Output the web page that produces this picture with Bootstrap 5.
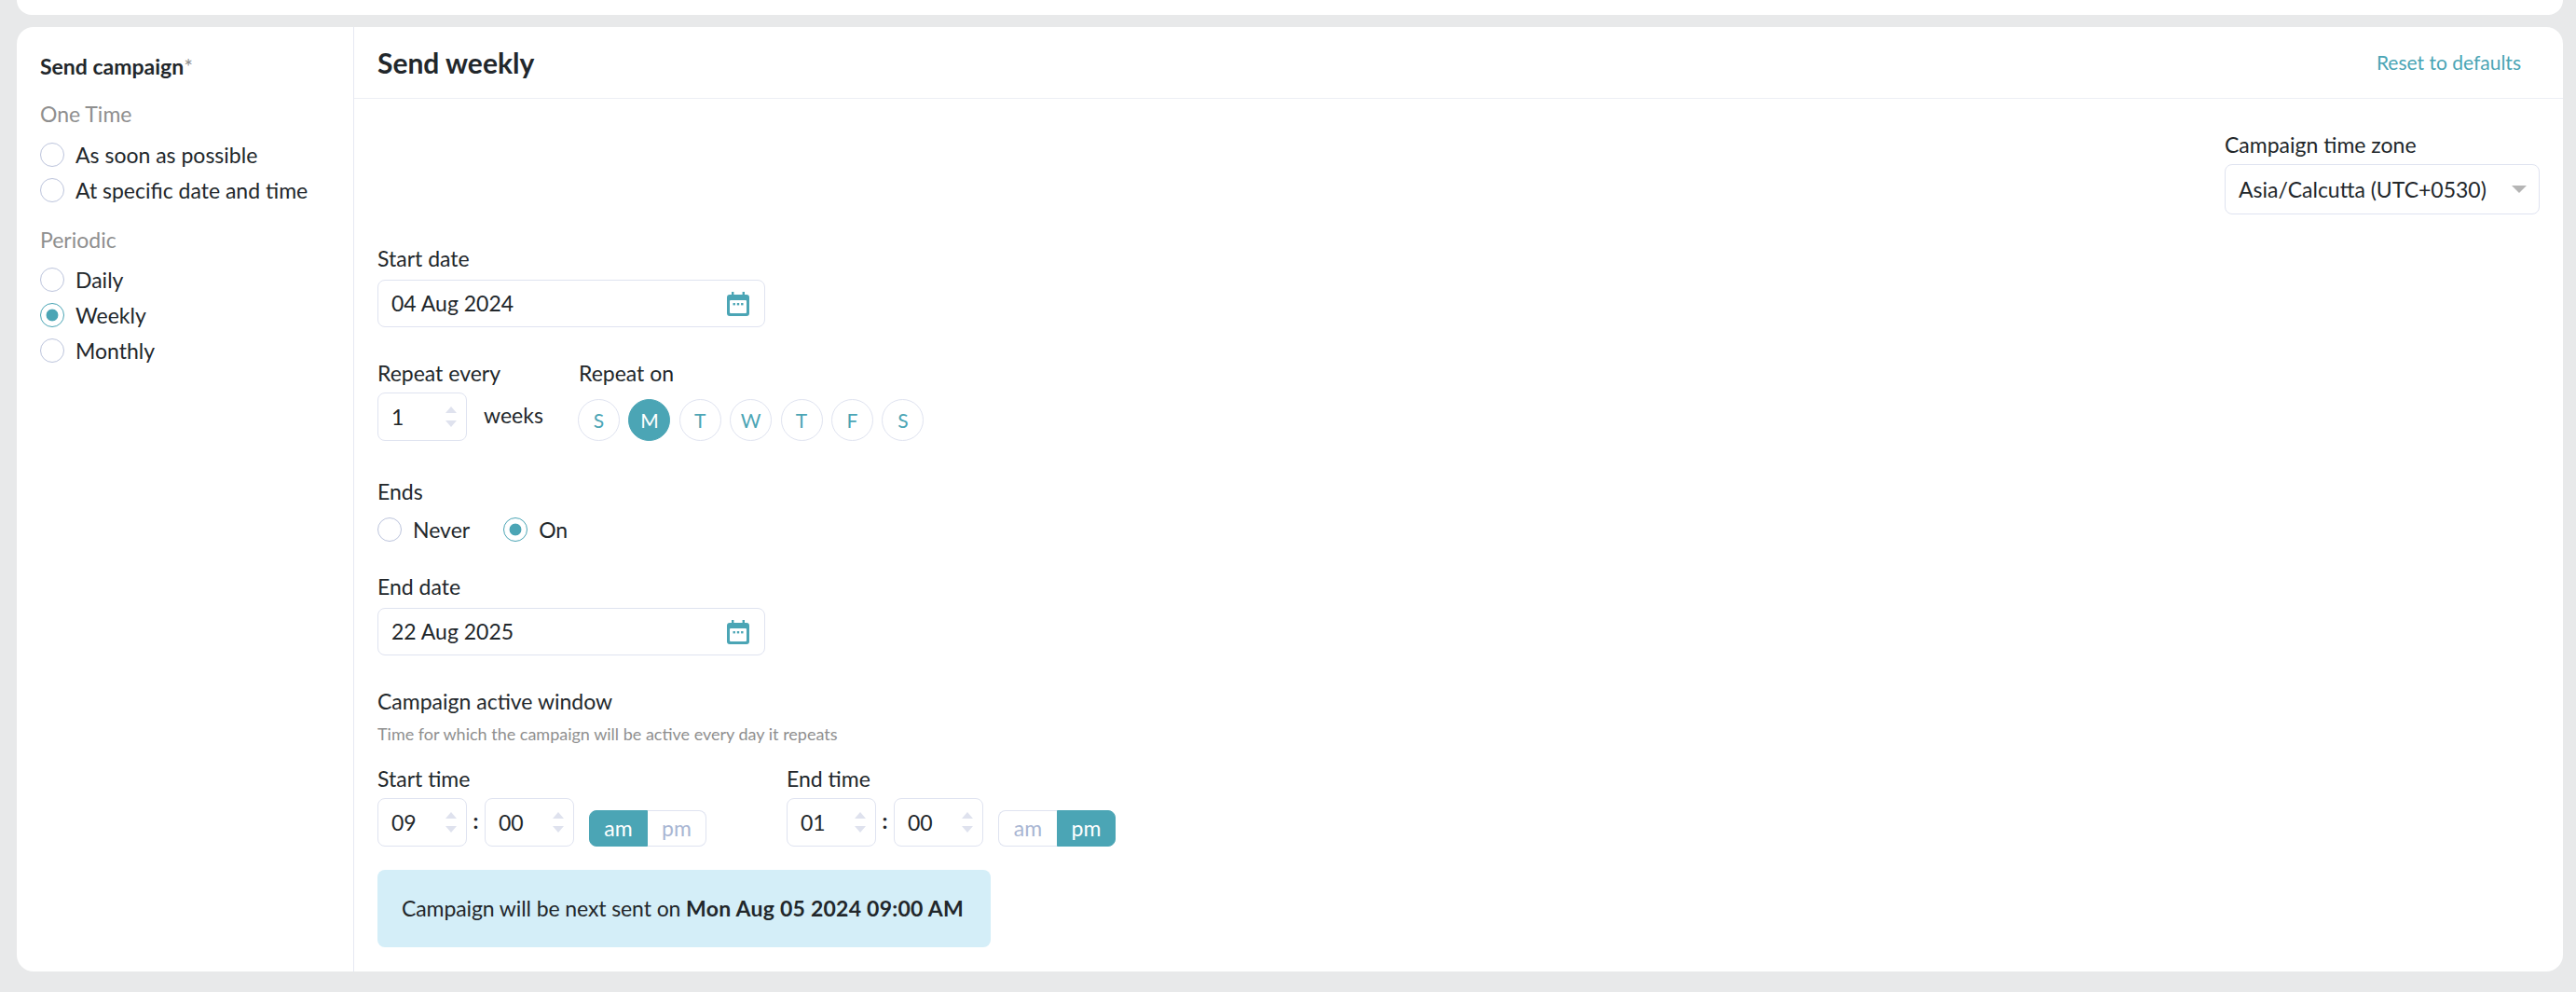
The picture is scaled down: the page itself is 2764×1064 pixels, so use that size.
<!DOCTYPE html>
<html lang="en">
  <head>
    <meta charset="UTF-8" />
    <meta name="viewport" content="width=device-width, initial-scale=1.0" />
    <title>Send campaign</title>
    <link
      href="https://cdn.jsdelivr.net/npm/bootstrap@5.3.0/dist/css/bootstrap.min.css"
      rel="stylesheet"
    />
    <style>
      body {
        background-color: #e8e9ea;
        font-family: Lato, "Liberation Sans", sans-serif;
        font-size: 23px;
        color: #22272b;
        padding: 0 14px 22px 18px;
      }
      .top-strip {
        height: 16px;
        margin-bottom: 13px;
        background: #fff;
        border-radius: 0 0 18px 18px;
      }
      .main-panel {
        background: #fff;
        border-radius: 18px;
        height: 1013px;
      }
      .side-col {
        width: 362px;
        flex-shrink: 0;
        border-right: 1px solid #e6e9f2;
        padding: 27px 25px;
      }
      .side-title {
        font-weight: 700;
        line-height: 30px;
        margin-bottom: 21px;
      }
      .side-title span {
        font-weight: 400;
        color: #8f8f8f;
      }
      .side-group {
        color: #8f8f8f;
        line-height: 30px;
        margin-bottom: 10px;
      }
      .radio-row {
        height: 38px;
        margin: 0;
      }
      .radio-row .form-check-input {
        width: 26px;
        height: 26px;
        margin: 0 12px 0 0;
        flex-shrink: 0;
        border: 1px solid #bcc4dc;
        background-color: #fff;
      }
      .radio-row .form-check-input:checked {
        border-color: #4ba5b5;
        background-image: radial-gradient(circle, #4ba5b5 6px, #fff 6.8px);
      }
      .radio-gap {
        margin-top: 19px;
        margin-bottom: 9px;
      }
      .panel-head {
        height: 77px;
        padding: 0 45px 0 25px;
        border-bottom: 1px solid #eceef4;
      }
      .panel-title {
        font-size: 30px;
        font-weight: 700;
        margin: 0;
      }
      .reset-link {
        color: #4ba5b5;
        font-size: 21px;
        text-decoration: none;
      }
      .panel-body {
        padding: 34px 25px 26px;
      }
      .fld-label {
        display: block;
        line-height: 30px;
        margin: 0 0 6px;
      }
      .tz-box {
        width: 338px;
      }
      .tz-box .form-select {
        height: 54px;
        padding: 0 13px 0 14px;
        background-image: none;
        font-size: 23px;
        color: #22272b;
        border-color: #dfe3f0;
        border-radius: 8px;
      }
      .tz-arrow {
        border-left: 8px solid transparent;
        border-right: 8px solid transparent;
        border-top: 8px solid #b5b5b5;
      }
      .date-box {
        width: 416px;
        height: 51px;
        padding: 0 16px 0 14px;
        font-size: 23px;
        color: #22272b;
        border-color: #dfe3f0;
        border-radius: 8px;
      }
      .date-label {
        margin-bottom: 8px;
      }
      .gap-start {
        margin-top: 32px;
      }
      .gap-repeat {
        margin-top: 34px;
      }
      .num-box {
        width: 96px;
        height: 52px;
        padding: 0 10px 0 14px;
        font-size: 23px;
        color: #22272b;
        border-color: #dfe3f0;
        border-radius: 8px;
      }
      .spin {
        gap: 8px;
      }
      .spin i {
        display: block;
        border-left: 6px solid transparent;
        border-right: 6px solid transparent;
      }
      .spin i:first-child {
        border-bottom: 7px solid #dfe2ee;
      }
      .spin i:last-child {
        border-top: 7px solid #dfe2ee;
      }
      .repeat-unit {
        width: 120px;
        padding-left: 18px;
        height: 48px;
      }
      .day-wrap {
        margin-top: 13px;
        gap: 9.4px;
        margin-left: -1px;
      }
      .day-dot {
        width: 45px;
        height: 45px;
        border: 1px solid #dfe3f0;
        border-radius: 50%;
        color: #4ba5b5;
        font-size: 21px;
      }
      .day-dot.day-on {
        background: #4ba5b5;
        border-color: #4ba5b5;
        color: #fff;
      }
      .gap-ends {
        margin-top: 39px;
      }
      .ends-row {
        margin-top: 13px;
        gap: 36px;
        height: 26px;
      }
      .ends-row .radio-row {
        height: 26px;
      }
      .gap-end {
        margin-top: 33px;
      }
      .gap-window {
        margin-top: 34px;
      }
      .window-title {
        margin: 0;
      }
      .hint-text {
        margin-top: 10px;
        font-size: 18px;
        line-height: 20px;
        color: #8f8f8f;
      }
      .gap-time {
        margin-top: 23px;
      }
      .time-col {
        width: 439px;
      }
      .time-colon {
        width: 19px;
        text-align: center;
        font-weight: 700;
        margin-bottom: 4px;
      }
      .ampm {
        margin: 13px 0 0 16px;
        width: 126px;
        height: 39px;
      }
      .ampm .btn {
        width: 50%;
        padding: 0;
        font-size: 23px;
        line-height: 1;
        color: #a9b6d3;
        background: #fff;
        border: 1px solid #dfe3f0;
        border-radius: 8px;
      }
      .ampm .btn.ampm-on {
        color: #fff;
        background: #4ba5b5;
        border-color: #4ba5b5;
      }
      .next-note {
        margin-top: 25px;
        width: 658px;
        height: 83px;
        padding: 0 26px;
        letter-spacing: -0.1px;
        background: #d4eef8;
        border-radius: 8px;
      }
      .next-note strong {
        letter-spacing: 0.25px;
      }
    </style>
  </head>
  <body>
    <div class="top-strip"></div>

    <div class="main-panel d-flex">
      <!-- left column -->
      <div class="side-col">
        <div class="side-title">Send campaign<span>*</span></div>
        <div class="side-group">One Time</div>
        <label class="radio-row d-flex align-items-center">
          <input class="form-check-input" type="radio" name="sendType" />As soon as possible
        </label>
        <label class="radio-row d-flex align-items-center">
          <input class="form-check-input" type="radio" name="sendType" />At specific date and time
        </label>
        <div class="side-group radio-gap">Periodic</div>
        <label class="radio-row d-flex align-items-center">
          <input class="form-check-input" type="radio" name="sendType" />Daily
        </label>
        <label class="radio-row d-flex align-items-center">
          <input class="form-check-input" type="radio" name="sendType" checked />Weekly
        </label>
        <label class="radio-row d-flex align-items-center">
          <input class="form-check-input" type="radio" name="sendType" />Monthly
        </label>
      </div>

      <!-- right column -->
      <div class="flex-grow-1">
        <div class="panel-head d-flex align-items-center justify-content-between">
          <h2 class="panel-title">Send weekly</h2>
          <a class="reset-link" href="#">Reset to defaults</a>
        </div>

        <div class="panel-body">
          <div class="d-flex justify-content-end">
            <div class="tz-box">
              <label class="fld-label">Campaign time zone</label>
              <div class="form-select d-flex align-items-center justify-content-between">
                <span>Asia/Calcutta (UTC+0530)</span>
                <span class="tz-arrow"></span>
              </div>
            </div>
          </div>

          <div class="gap-start">
            <label class="fld-label date-label">Start date</label>
            <div class="form-control date-box d-flex align-items-center justify-content-between">
              <span>04 Aug 2024</span>
              <svg width="24" height="26" viewBox="0 0 24 26">
                <path fill="#4ba5b5" d="M5 0h2.4v3h9.2V0H19v3h2a3 3 0 0 1 3 3v17a3 3 0 0 1-3 3H3a3 3 0 0 1-3-3V6a3 3 0 0 1 3-3h2z" />
                <rect x="3" y="9" width="18" height="14" rx="1" fill="#fff" />
                <rect x="6.5" y="12" width="2.4" height="2.4" fill="#4ba5b5" />
                <rect x="10.8" y="12" width="2.4" height="2.4" fill="#4ba5b5" />
                <rect x="15.1" y="12" width="2.4" height="2.4" fill="#4ba5b5" />
              </svg>
            </div>
          </div>

          <div class="gap-repeat d-flex">
            <div>
              <label class="fld-label">Repeat every</label>
              <div class="d-flex align-items-start">
                <div class="form-control num-box d-flex align-items-center justify-content-between">
                  <span>1</span>
                  <span class="spin d-flex flex-column"><i></i><i></i></span>
                </div>
                <div class="repeat-unit d-flex align-items-center">weeks</div>
              </div>
            </div>
            <div>
              <label class="fld-label">Repeat on</label>
              <div class="day-wrap d-flex">
                <span class="day-dot d-flex align-items-center justify-content-center">S</span>
                <span class="day-dot day-on d-flex align-items-center justify-content-center">M</span>
                <span class="day-dot d-flex align-items-center justify-content-center">T</span>
                <span class="day-dot d-flex align-items-center justify-content-center">W</span>
                <span class="day-dot d-flex align-items-center justify-content-center">T</span>
                <span class="day-dot d-flex align-items-center justify-content-center">F</span>
                <span class="day-dot d-flex align-items-center justify-content-center">S</span>
              </div>
            </div>
          </div>

          <div class="gap-ends">
            <label class="fld-label mb-0">Ends</label>
            <div class="ends-row d-flex">
              <label class="radio-row d-flex align-items-center">
                <input class="form-check-input" type="radio" name="endType" />Never
              </label>
              <label class="radio-row d-flex align-items-center">
                <input class="form-check-input" type="radio" name="endType" checked />On
              </label>
            </div>
          </div>

          <div class="gap-end">
            <label class="fld-label date-label">End date</label>
            <div class="form-control date-box d-flex align-items-center justify-content-between">
              <span>22 Aug 2025</span>
              <svg width="24" height="26" viewBox="0 0 24 26">
                <path fill="#4ba5b5" d="M5 0h2.4v3h9.2V0H19v3h2a3 3 0 0 1 3 3v17a3 3 0 0 1-3 3H3a3 3 0 0 1-3-3V6a3 3 0 0 1 3-3h2z" />
                <rect x="3" y="9" width="18" height="14" rx="1" fill="#fff" />
                <rect x="6.5" y="12" width="2.4" height="2.4" fill="#4ba5b5" />
                <rect x="10.8" y="12" width="2.4" height="2.4" fill="#4ba5b5" />
                <rect x="15.1" y="12" width="2.4" height="2.4" fill="#4ba5b5" />
              </svg>
            </div>
          </div>

          <div class="gap-window">
            <div class="fld-label window-title">Campaign active window</div>
            <div class="hint-text">Time for which the campaign will be active every day it repeats</div>
          </div>

          <div class="gap-time d-flex">
            <div class="time-col">
              <label class="fld-label">Start time</label>
              <div class="d-flex align-items-start">
                <div class="form-control num-box d-flex align-items-center justify-content-between">
                  <span>09</span>
                  <span class="spin d-flex flex-column"><i></i><i></i></span>
                </div>
                <span class="time-colon align-self-center">:</span>
                <div class="form-control num-box d-flex align-items-center justify-content-between">
                  <span>00</span>
                  <span class="spin d-flex flex-column"><i></i><i></i></span>
                </div>
                <div class="ampm d-flex">
                  <button type="button" class="btn ampm-on rounded-end-0">am</button>
                  <button type="button" class="btn rounded-start-0 border-start-0">pm</button>
                </div>
              </div>
            </div>
            <div>
              <label class="fld-label">End time</label>
              <div class="d-flex align-items-start">
                <div class="form-control num-box d-flex align-items-center justify-content-between">
                  <span>01</span>
                  <span class="spin d-flex flex-column"><i></i><i></i></span>
                </div>
                <span class="time-colon align-self-center">:</span>
                <div class="form-control num-box d-flex align-items-center justify-content-between">
                  <span>00</span>
                  <span class="spin d-flex flex-column"><i></i><i></i></span>
                </div>
                <div class="ampm d-flex">
                  <button type="button" class="btn rounded-end-0 border-end-0">am</button>
                  <button type="button" class="btn ampm-on rounded-start-0">pm</button>
                </div>
              </div>
            </div>
          </div>

          <div class="next-note d-flex align-items-center">
            <span>Campaign will be next sent on <strong>Mon Aug 05 2024 09:00 AM</strong></span>
          </div>
        </div>
      </div>
    </div>

    <script src="https://cdn.jsdelivr.net/npm/bootstrap@5.3.0/dist/js/bootstrap.bundle.min.js"></script>
  </body>
</html>
